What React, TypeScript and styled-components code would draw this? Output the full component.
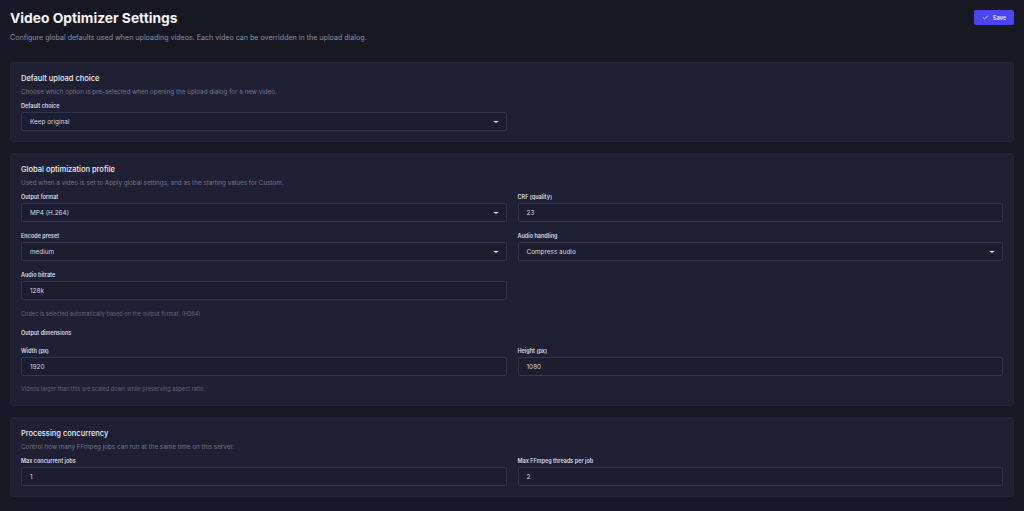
import React from 'react';
import { styled, createGlobalStyle } from 'styled-components';

const GlobalStyle = createGlobalStyle`
    html, body {
        margin: 0;
        padding: 0;
        background: #181824;
    }
    body {
        font-family: Inter, 'Noto Sans', sans-serif;
        color: #e6e7ee;
    }
    * {
        box-sizing: border-box;
    }
`;

const Page = styled.div`
    width: 1024px;
    min-height: 511px;
    padding: 9px 10px 14px;
    display: flex;
    flex-direction: column;
    gap: 11px;
`;

const PageHeader = styled.header`
    display: flex;
    justify-content: space-between;
    align-items: flex-start;
    margin-bottom: 8px;
`;

const TitleBlock = styled.div`
    display: flex;
    flex-direction: column;
    gap: 6px;
`;

const PageTitle = styled.h1`
    margin: 0;
    font-size: 13.8px;
    line-height: 18px;
    font-weight: 700;
    color: #f3f4f8;
`;

const PageSubtitle = styled.p`
    margin: 0;
    font-size: 7.1px;
    line-height: 10px;
    color: #8d90a3;
`;

const SaveButton = styled.button`
    display: flex;
    align-items: center;
    gap: 4px;
    height: 15px;
    margin-top: 1px;
    padding: 0 8px;
    border: none;
    border-radius: 2px;
    background: #4b46f0;
    color: #e9e9ff;
    font-family: inherit;
    font-size: 5.6px;
    font-weight: 600;
    cursor: pointer;
`;

const Card = styled.section`
    background: #1f2033;
    border: 1px solid #23253a;
    border-radius: 3px;
    padding: 9px 10px 10px;
    display: flex;
    flex-direction: column;
`;

const CardTitle = styled.h2`
    margin: 0;
    font-size: 7.5px;
    line-height: 14px;
    font-weight: 500;
    color: #eceef4;
`;

const CardDesc = styled.p`
    margin: 0;
    font-size: 6.3px;
    line-height: 12px;
    color: #73778c;
`;

const Grid = styled.div<{ $cols?: number; $mt?: number }>`
    display: grid;
    grid-template-columns: ${p => (p.$cols === 1 ? 'calc(50% - 5.5px)' : '1fr 1fr')};
    column-gap: 11px;
    row-gap: 9px;
    margin-top: ${p => p.$mt ?? 3}px;
`;

const Field = styled.div`
    display: flex;
    flex-direction: column;
    gap: 1px;
`;

const Label = styled.label`
    font-size: 5.5px;
    line-height: 10px;
    font-weight: 600;
    color: #d9dbe6;
`;

const SectionLabel = styled.div`
    margin-top: 8px;
    font-size: 5.5px;
    line-height: 10px;
    font-weight: 600;
    color: #d9dbe6;
`;

const Box = styled.div`
    position: relative;
    height: 19px;
    display: flex;
    align-items: center;
    padding: 0 8px;
    background: #1c1d2e;
    border: 1px solid #34374c;
    border-radius: 2px;
    font-size: 6.4px;
    color: #d5d7e2;
`;

const Caret = styled.span`
    position: absolute;
    right: 7px;
    top: 50%;
    margin-top: -1px;
    width: 0;
    height: 0;
    border-left: 3px solid transparent;
    border-right: 3px solid transparent;
    border-top: 2.5px solid #d8dae4;
`;

const HelpText = styled.p<{ $mt?: number }>`
    margin: ${p => p.$mt ?? 8}px 0 0;
    font-size: 5.6px;
    line-height: 12px;
    color: #62667b;
`;

type FieldProps = { label: string; value: string; select?: boolean };

const FormField = ({ label, value, select }: FieldProps) => (
    <Field>
        <Label>{label}</Label>
        <Box>
            {value}
            {select && <Caret />}
        </Box>
    </Field>
);

const CheckIcon = () => (
    <svg width="7" height="7" viewBox="0 0 24 24" fill="none" stroke="currentColor" strokeWidth="3" strokeLinecap="round" strokeLinejoin="round">
        <path d="M20 6 9 17l-5-5" />
    </svg>
);

const App = () => {
    return (
        <>
            <GlobalStyle />
            <Page>
                <PageHeader>
                    <TitleBlock>
                        <PageTitle>Video Optimizer Settings</PageTitle>
                        <PageSubtitle>
                            Configure global defaults used when uploading videos. Each video can be overridden in the upload dialog.
                        </PageSubtitle>
                    </TitleBlock>
                    <SaveButton>
                        <CheckIcon />
                        Save
                    </SaveButton>
                </PageHeader>

                <Card>
                    <CardTitle>Default upload choice</CardTitle>
                    <CardDesc>Choose which option is pre-selected when opening the upload dialog for a new video.</CardDesc>
                    <Grid $cols={1}>
                        <FormField label="Default choice" value="Keep original" select />
                    </Grid>
                </Card>

                <Card>
                    <CardTitle>Global optimization profile</CardTitle>
                    <CardDesc>Used when a video is set to Apply global settings, and as the starting values for Custom.</CardDesc>
                    <Grid>
                        <FormField label="Output format" value="MP4 (H.264)" select />
                        <FormField label="CRF (quality)" value="23" />
                        <FormField label="Encode preset" value="medium" select />
                        <FormField label="Audio handling" value="Compress audio" select />
                        <FormField label="Audio bitrate" value="128k" />
                    </Grid>
                    <HelpText>Codec is selected automatically based on the output format. (H264)</HelpText>
                    <SectionLabel>Output dimensions</SectionLabel>
                    <Grid $mt={8}>
                        <FormField label="Width (px)" value="1920" />
                        <FormField label="Height (px)" value="1080" />
                    </Grid>
                    <HelpText $mt={7}>Videos larger than this are scaled down while preserving aspect ratio.</HelpText>
                </Card>

                <Card>
                    <CardTitle>Processing concurrency</CardTitle>
                    <CardDesc>Control how many FFmpeg jobs can run at the same time on this server.</CardDesc>
                    <Grid>
                        <FormField label="Max concurrent jobs" value="1" />
                        <FormField label="Max FFmpeg threads per job" value="2" />
                    </Grid>
                </Card>
            </Page>
        </>
    );
};

export default App;
